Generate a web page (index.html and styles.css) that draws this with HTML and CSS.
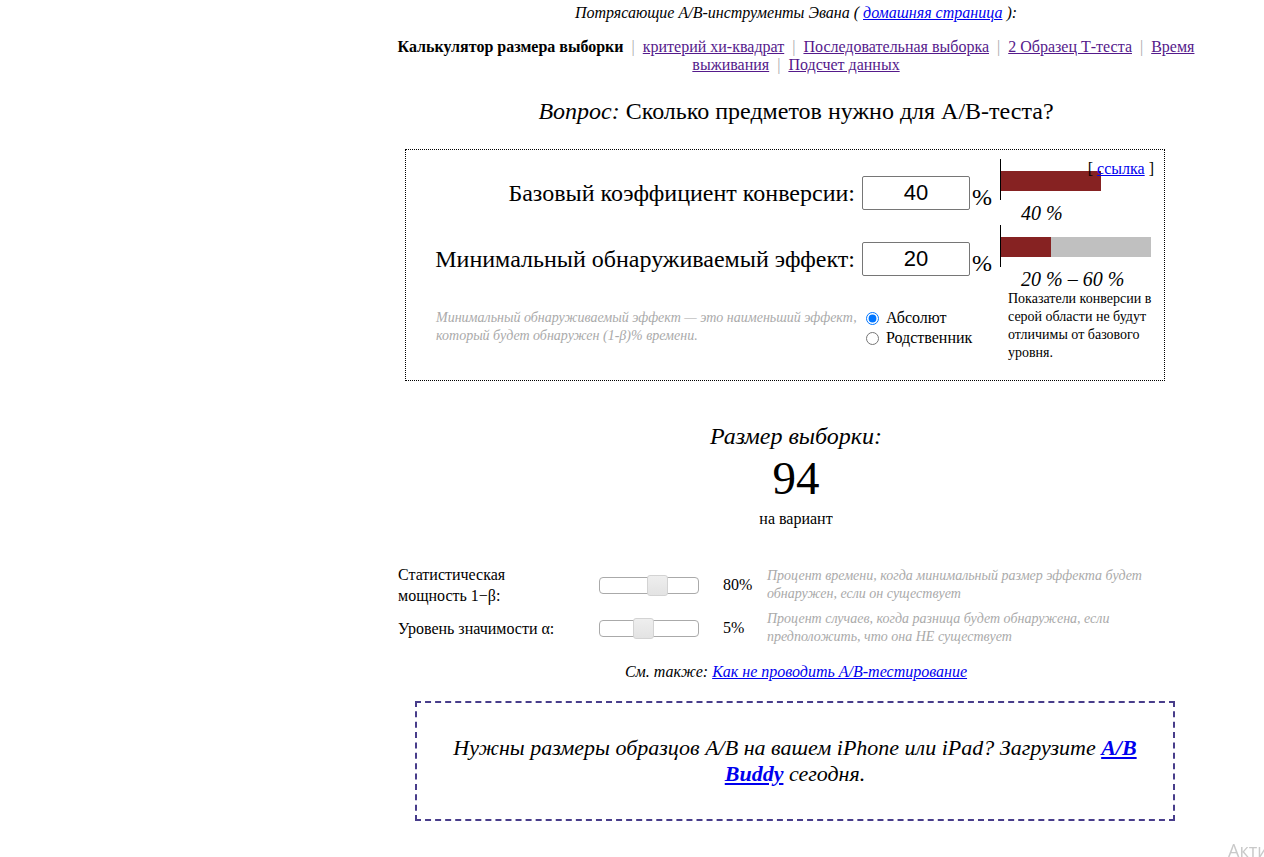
FILE: index.html
```html
<!DOCTYPE html>
<html lang="ru">
<head>
<meta charset="utf-8">
<title>Калькулятор размера выборки</title>
<link rel="stylesheet" href="styles.css">
</head>
<body>
<div class="page">
  <div class="title">Потрясающие A/B-инструменты Эвана ( <a href="#" class="blue">домашняя страница</a> ):</div>
  <div class="nav">
    <b>Калькулятор размера выборки</b> <span class="sep">|</span>
    <a href="#">критерий хи-квадрат</a> <span class="sep">|</span>
    <a href="#">Последовательная выборка</a> <span class="sep">|</span>
    <a href="#">2 Образец Т-теста</a> <span class="sep">|</span>
    <a href="#">Время выживания</a> <span class="sep">|</span>
    <a href="#">Подсчет данных</a>
  </div>
  <div class="question"><i>Вопрос:</i> Сколько предметов нужно для A/B-теста?</div>

  <div class="calc">
    <a href="#" class="reflink-wrap">[ <span class="reflink">ссылка</span> ]</a>
    <div class="calc-left">
      <div class="row row1">
        <div class="label">Базовый коэффициент конверсии:</div>
        <input class="num" type="text" value="40">
        <div class="pct">%</div>
      </div>
      <div class="row row2">
        <div class="label">Минимальный обнаруживаемый эффект:</div>
        <input class="num" type="text" value="20">
        <div class="pct">%</div>
      </div>
      <div class="row row3">
        <div class="explain">Минимальный обнаруживаемый эффект — это наименьший эффект, который будет обнаружен (1-β)% времени.</div>
        <div class="radios">
          <label class="radio"><input type="radio" name="m" checked> Абсолют</label>
          <label class="radio"><input type="radio" name="m"> Родственник</label>
        </div>
      </div>
    </div>
    <div class="calc-right">
      <div class="barbox bb1"><div class="bar"><div class="red" style="width:100px"></div></div></div>
      <div class="barlabel bl1">40 %</div>
      <div class="barbox bb2"><div class="bar"><div class="red" style="width:50px"></div><div class="gray" style="width:100px"></div></div></div>
      <div class="barlabel">20 % – 60 %</div>
      <div class="note">Показатели конверсии в серой области не будут отличимы от базового уровня.</div>
    </div>
  </div>

  <div class="result">
    <div class="rtitle">Размер выборки:</div>
    <div class="rnum">94</div>
    <div class="rsub">на вариант</div>
  </div>

  <div class="sliders">
    <div class="slabel"><span>Статистическая мощность 1−β:</span></div>
    <div class="track"><div class="thumb t1"></div></div>
    <div class="sval">80%</div>
    <div class="sdesc">Процент времени, когда минимальный размер эффекта будет обнаружен, если он существует</div>

    <div class="slabel"><span>Уровень значимости α:</span></div>
    <div class="track"><div class="thumb t2"></div></div>
    <div class="sval">5%</div>
    <div class="sdesc">Процент случаев, когда разница будет обнаружена, если предположить, что она НЕ существует</div>
  </div>

  <div class="seealso">См. также: <a href="#" class="blue">Как не проводить A/B-тестирование</a></div>

  <div class="promo"><p class="promo-text">Нужны размеры образцов A/B на вашем iPhone или iPad? Загрузите <a href="#" class="blue bold">A/B Buddy</a> сегодня.</p></div>
</div>
<div class="watermark">Активация Windows</div>
</body>
</html>
```

FILE: styles.css
```css
html, body {
  margin: 0;
  padding: 0;
  background: #fff;
  overflow: hidden;
}
body {
  font-family: "Liberation Serif", "Times New Roman", serif;
  color: #000;
  font-size: 16px;
}
a { color: #551a8b; }
a.blue { color: #0000ee; }
a.bold { font-weight: bold; }

.page {
  width: 804px;
  margin-left: 394px;
  padding-top: 4px;
}
.title {
  font-style: italic;
  font-size: 16px;
  line-height: 18px;
  text-align: center;
}
.nav {
  margin-top: 16px;
  font-size: 16px;
  line-height: 18px;
  text-align: center;
}
.sep { color: #aaa; padding: 0 4px; }
.question {
  margin-top: 23px;
  font-size: 24px;
  line-height: 28px;
  text-align: center;
}

.calc {
  position: relative;
  margin-top: 24px;
  margin-left: 11px;
  width: 758px;
  height: 230px;
  border: 1px dotted #000;
  display: flex;
}
.reflink-wrap {
  position: absolute;
  right: 10px;
  top: 10px;
  color: #000;
  text-decoration: none;
  font-size: 16px;
  line-height: 18px;
}
.reflink { color: #0000ee; text-decoration: underline; }

.calc-left {
  width: 594px;
  display: flex;
  flex-direction: column;
}
.row { display: flex; }
.row1 { margin-top: 26px; height: 34px; align-items: center; }
.row2 { margin-top: 32px; height: 34px; align-items: center; }
.label {
  width: 449px;
  padding-right: 7px;
  text-align: right;
  font-size: 24px;
  line-height: 28px;
  white-space: nowrap;
}
.num {
  box-sizing: border-box;
  width: 108px;
  height: 34px;
  margin: 0;
  padding: 0 4px;
  border: 1px solid #767676;
  border-radius: 2px;
  font-family: "Liberation Sans", Arial, sans-serif;
  font-size: 22px;
  text-align: center;
  color: #000;
}
.pct {
  font-size: 24px;
  line-height: 28px;
  padding-left: 2px;
  margin-top: 8px;
}
.row3 { margin-top: 33px; }
.explain {
  width: 424px;
  padding-left: 30px;
  padding-right: 2px;
  font-size: 14px;
  line-height: 18px;
  font-style: italic;
  color: #aaa;
}
.radios {
  display: flex;
  flex-direction: column;
  font-size: 16px;
  line-height: 20px;
  margin-top: -1px;
}
.radio { display: flex; align-items: center; }
.radio input {
  width: 13px;
  height: 13px;
  margin: 0 7px 0 4px;
}

.calc-right {
  width: 164px;
  display: flex;
  flex-direction: column;
}
.barbox {
  box-sizing: border-box;
  border-left: 1px solid #000;
  height: 42px;
  padding-top: 12px;
}
.bb1 { margin-top: 9px; height: 41px; }
.bar { display: flex; height: 20px; }
.red { background: #862222; height: 20px; }
.gray { background: #c0c0c0; height: 20px; }
.barlabel {
  font-style: italic;
  font-size: 20px;
  line-height: 25px;
  padding-left: 21px;
  white-space: nowrap;
}
.bl1 { padding-top: 2px; line-height: 23px; }
.note {
  margin-top: -2px;
  padding-left: 8px;
  width: 150px;
  font-size: 14px;
  line-height: 18px;
}

.result {
  margin-top: 41px;
  text-align: center;
}
.rtitle {
  font-style: italic;
  font-size: 24px;
  line-height: 28px;
}
.rnum {
  margin-top: 2px;
  font-size: 47px;
  line-height: 52px;
}
.rsub {
  font-size: 16px;
  line-height: 18px;
  margin-top: 6px;
}

.sliders {
  margin-top: 36px;
  margin-left: 4px;
  display: grid;
  grid-template-columns: 201px 100px 68px 390px;
  row-gap: 4px;
  align-items: center;
}
.slabel {
  font-size: 16px;
  line-height: 21px;
}
.slabel span { display: block; width: 170px; }
.track {
  position: relative;
  box-sizing: border-box;
  height: 17px;
  border: 1px solid #aaa;
  border-radius: 4px;
  background: #fff;
}
.thumb {
  position: absolute;
  top: -3px;
  width: 21px;
  height: 21px;
  box-sizing: border-box;
  border: 1px solid #d3d3d3;
  border-radius: 3px;
  background: linear-gradient(#eeeeee, #e3e3e3);
}
.t1 { left: 47px; }
.t2 { left: 33px; }
.sval {
  padding-left: 24px;
  font-size: 16px;
}
.sdesc {
  font-size: 14px;
  line-height: 18px;
  font-style: italic;
  color: #aaa;
}

.seealso {
  margin-top: 17px;
  text-align: center;
  font-style: italic;
  font-size: 16px;
  line-height: 18px;
}
.promo {
  margin-top: 20px;
  margin-left: 21px;
  box-sizing: border-box;
  width: 760px;
  height: 120px;
  border: 2px dashed #483d8b;
  display: flex;
  align-items: center;
  justify-content: center;
  padding: 0 30px;
}
.promo-text {
  margin: 0;
  text-align: center;
  font-style: italic;
  font-size: 22px;
  line-height: 26px;
}

.watermark {
  position: fixed;
  left: 1228px;
  top: 838px;
  font-family: "Open Sans", "Noto Sans", sans-serif;
  font-size: 18px;
  color: #c9c9c9;
  white-space: nowrap;
}
```
